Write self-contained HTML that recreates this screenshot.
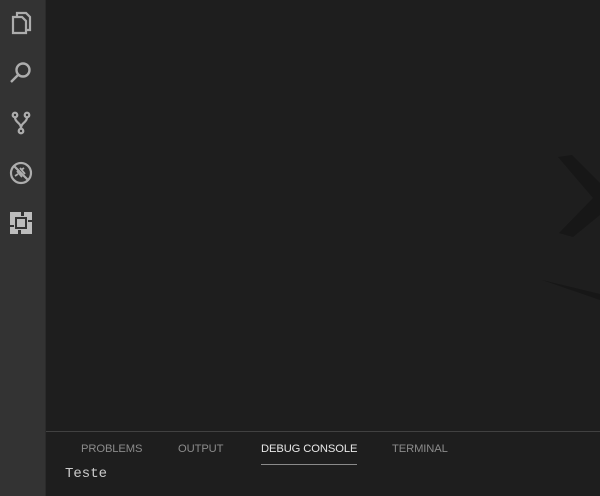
<!DOCTYPE html>
<html><head><meta charset="utf-8"><style>
html,body{margin:0;padding:0;width:600px;height:496px;overflow:hidden;background:#1e1e1e;font-family:"Liberation Sans",sans-serif}
#bar{position:absolute;left:0;top:0;width:45px;height:496px;background:#333333;border-right:1px solid #2b2b2b}
#bar svg{position:absolute;left:7px;width:28px;height:28px}
#editor{position:absolute;left:46px;top:0;right:0;height:431px;background:#1e1e1e}
#panel{position:absolute;left:46px;top:431px;right:0;bottom:0;background:#1e1e1e;border-top:1px solid #414141}
.tab{position:absolute;top:11px;font-size:11.2px;color:#8b8b8b;letter-spacing:-0.1px}
.tab.a{color:#e7e7e7}
.ul{position:absolute;left:215px;top:32px;width:96px;height:1px;background:#8a8a8a}
.out{position:absolute;left:19px;top:34px;font-family:"Liberation Mono",monospace;font-size:14px;color:#cccccc}
</style></head><body>
<div id="bar">
<svg style="top:8px" viewBox="0 0 28 28" fill="none" stroke="#adadad" stroke-width="2.2"><path d="M6 9h9l4 4v12H6z"/><path d="M10 9V5h9l4 4v13h-4"/></svg>
<svg style="top:59px" viewBox="0 0 28 28" fill="none" stroke="#adadad" stroke-width="2.4"><circle cx="16" cy="11" r="6.5"/><path d="M11.5 15.5L4 23"/></svg>
<svg style="top:108px" viewBox="0 0 28 28" fill="none" stroke="#adadad" stroke-width="2.2"><circle cx="8" cy="7" r="2.3"/><circle cx="20" cy="7" r="2.3"/><circle cx="14" cy="23" r="2.3"/><path d="M8 9.5c0 5 6 5 6 11M20 9.5c0 5-6 5-6 11"/></svg>
<svg style="top:159px" viewBox="0 0 28 28" fill="none" stroke="#adadad" stroke-width="2.2"><circle cx="14" cy="14" r="10"/><path d="M7 7l14 14"/><path d="M10 12l5 6M13 9l5 6M14 11l3-2M11 15l-3 2" stroke-width="1.8"/></svg>
<svg style="top:209px" viewBox="0 0 28 28"><path fill="#bdbdbd" d="M3 3h22v22H3z"/><path fill="#333" d="M14 3h3v4h-3zM3 16h4v2H3zM21 11h4v2h-4zM11 21h3v4h-3z"/><path fill="#333" d="M8 8h12v12H8z"/><path fill="#bdbdbd" d="M10 10h8v8h-8z"/></svg>
</div>
<div id="editor">
<svg style="position:absolute;left:0;top:0" width="554" height="431" viewBox="0 0 554 431"><path d="M512 157L526 155L554 183L554 215L527 237L513 233L547 198Z" fill="#171717"/><path d="M496 280l58 14v6z" fill="#171717"/></svg>
</div>
<div id="panel">
<span class="tab" style="left:35px">PROBLEMS</span>
<span class="tab" style="left:132px">OUTPUT</span>
<span class="tab a" style="left:215px">DEBUG CONSOLE</span>
<span class="tab" style="left:346px">TERMINAL</span>
<div class="ul"></div>
<div class="out">Teste</div>
</div>
</body></html>
